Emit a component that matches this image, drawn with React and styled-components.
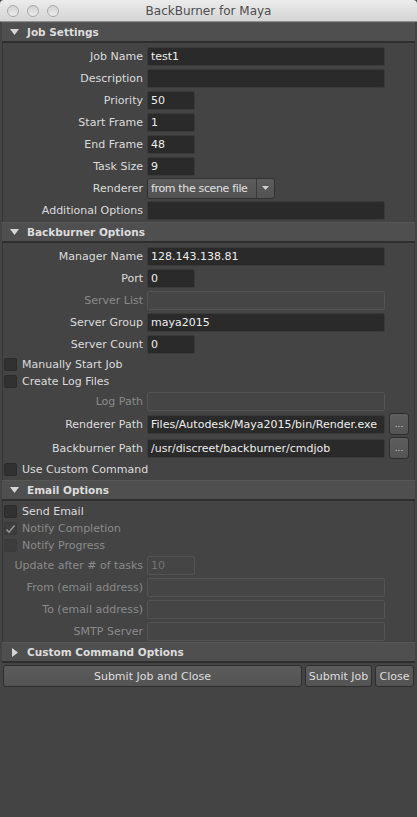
import React from "react";
import styled, { createGlobalStyle } from "styled-components";

const Global = createGlobalStyle`
  html, body { margin: 0; padding: 0; background: #444444; }
  body { font-family: "DejaVu Sans", "Liberation Sans", sans-serif; font-size: 11px; }
  * { box-sizing: border-box; }
`;

const Window = styled.div`
  width: 417px;
  height: 817px;
  background: #444444;
  display: flex;
  flex-direction: column;
  overflow: hidden;
`;

const TitleBar = styled.div`
  height: 22px;
  flex: none;
  position: relative;
  display: flex;
  align-items: center;
  justify-content: center;
  background: linear-gradient(#ececec, #d4d4d4);
  border-bottom: 1px solid #8e8e8e;
  border-radius: 4px 4px 0 0;
`;

const Lights = styled.div`
  position: absolute;
  left: 7px;
  top: 5px;
  display: flex;
  gap: 8px;
`;

const Light = styled.span`
  width: 12px;
  height: 12px;
  border-radius: 50%;
  background: linear-gradient(#d2d2d2, #ececec);
  border: 1px solid #a9a9a9;
`;

const Title = styled.div`
  font-size: 12px;
  color: #4d4d4d;
`;

const Content = styled.div`
  padding: 0 2px;
  display: flex;
  flex-direction: column;
`;

const HeaderBar = styled.div`
  height: 21px;
  display: flex;
  align-items: center;
  background: #4f4f4f;
  border-top: 1px solid #565656;
  border-bottom: 2px solid #2e2e2e;
  color: #dddddd;
  font-weight: bold;
  font-size: 10.5px;
`;

const Arrow = styled.span`
  width: 25px;
  display: flex;
  justify-content: center;
`;

const SectionBody = styled.div`
  border-left: 1px solid #363636;
  border-right: 1px solid #3a3a3a;
  padding: 2px 0 ${(p) => p.$pb || 0}px 0;
  display: flex;
  flex-direction: column;
`;

const Row = styled.div`
  height: ${(p) => p.$h || 22}px;
  display: flex;
  align-items: center;
`;

const Label = styled.div`
  width: 140px;
  margin-right: 4px;
  text-align: right;
  white-space: nowrap;
  color: ${(p) => (p.$disabled ? "#8a8a8a" : "#dcdcdc")};
`;

const Field = styled.div`
  width: ${(p) => p.$w || 238}px;
  height: 19px;
  border-radius: 2px;
  padding: 0 3px;
  display: flex;
  align-items: center;
  overflow: hidden;
  white-space: nowrap;
  font-size: 11px;
  background: ${(p) => (p.$disabled ? "#454545" : "#2a2a2a")};
  border: 1px solid ${(p) => (p.$disabled ? "#535353" : "#3a3a3a")};
  color: ${(p) => (p.$disabled ? "#747474" : "#eeeeee")};
`;

const Dropdown = styled.div`
  width: 128px;
  height: 21px;
  display: flex;
  align-items: stretch;
  border: 1px solid #323232;
  border-radius: 3px;
  background: linear-gradient(#5c5c5c, #525252);
  color: #e2e2e2;
`;

const DropText = styled.div`
  flex: 1;
  display: flex;
  align-items: center;
  padding-left: 3px;
  border-right: 1px solid #3a3a3a;
  white-space: nowrap;
  overflow: hidden;
  letter-spacing: -0.35px;
`;

const DropArrow = styled.div`
  width: 17px;
  flex: none;
  display: flex;
  align-items: center;
  justify-content: center;
`;

const SmallButton = styled.div`
  width: 20px;
  height: 22px;
  margin-left: 4px;
  border: 1px solid #2e2e2e;
  border-radius: 3px;
  background: linear-gradient(#5e5e5e, #545454);
  color: #cfcfcf;
  display: flex;
  align-items: flex-end;
  justify-content: center;
  padding-bottom: 5px;
  font-size: 9px;
  line-height: 1;
`;

const CheckRow = styled.div`
  height: ${(p) => p.$h || 17}px;
  display: flex;
  align-items: center;
  padding-left: 1px;
`;

const Box = styled.span`
  width: 13px;
  height: 13px;
  border-radius: 2px;
  margin-right: 5px;
  display: flex;
  align-items: center;
  justify-content: center;
  background: ${(p) => (p.$disabled ? "#3d3d3d" : "#313131")};
  border: 1px solid ${(p) => (p.$disabled ? "#3a3a3a" : "#2b2b2b")};
`;

const CheckLabel = styled.span`
  color: ${(p) => (p.$disabled ? "#8a8a8a" : "#dcdcdc")};
  white-space: nowrap;
`;

const ButtonBar = styled.div`
  display: flex;
  gap: 3px;
  padding: 2px 1px 0 1px;
`;

const Button = styled.div`
  height: 22px;
  flex: ${(p) => (p.$grow ? "1" : "none")};
  width: ${(p) => (p.$w ? p.$w + "px" : "auto")};
  display: flex;
  align-items: center;
  justify-content: center;
  border: 1px solid #2e2e2e;
  border-radius: 3px;
  background: linear-gradient(#5c5c5c, #535353);
  color: #dedede;
  white-space: nowrap;
`;

const DownTri = () => (
  <svg width="9" height="6" viewBox="0 0 9 6">
    <path d="M0 0 L9 0 L4.5 6 Z" fill="#d6d6d6" />
  </svg>
);

const RightTri = () => (
  <svg width="6" height="9" viewBox="0 0 6 9">
    <path d="M0 0 L6 4.5 L0 9 Z" fill="#d6d6d6" />
  </svg>
);

const Header = ({ title, open = true }) => (
  <HeaderBar>
    <Arrow>{open ? <DownTri /> : <RightTri />}</Arrow>
    {title}
  </HeaderBar>
);

const FieldRow = ({ label, value = "", w, disabled, h }) => (
  <Row $h={h}>
    <Label $disabled={disabled}>{label}</Label>
    <Field $w={w} $disabled={disabled}>{value}</Field>
  </Row>
);

const PathRow = ({ label, value }) => (
  <Row $h={24}>
    <Label>{label}</Label>
    <Field>{value}</Field>
    <SmallButton>...</SmallButton>
  </Row>
);

const Check = ({ label, checked, disabled, h }) => (
  <CheckRow $h={h}>
    <Box $disabled={disabled}>
      {checked && (
        <svg width="11" height="10" viewBox="0 0 11 10">
          <path d="M1.5 5.5 L4 8.2 L9.5 1.5" stroke="#9a9a9a" strokeWidth="1.4" fill="none" />
        </svg>
      )}
    </Box>
    <CheckLabel $disabled={disabled}>{label}</CheckLabel>
  </CheckRow>
);

export default function App() {
  return (
    <Window>
      <Global />
      <TitleBar>
        <Lights>
          <Light />
          <Light />
          <Light />
        </Lights>
        <Title>BackBurner for Maya</Title>
      </TitleBar>
      <Content>
        <Header title="Job Settings" />
        <SectionBody $pb={1}>
          <FieldRow label="Job Name" value="test1" />
          <FieldRow label="Description" />
          <FieldRow label="Priority" value="50" w={48} />
          <FieldRow label="Start Frame" value="1" w={48} />
          <FieldRow label="End Frame" value="48" w={48} />
          <FieldRow label="Task Size" value="9" w={48} />
          <Row>
            <Label>Renderer</Label>
            <Dropdown>
              <DropText>from the scene file</DropText>
              <DropArrow>
                <svg width="7" height="4" viewBox="0 0 7 4">
                  <path d="M0 0 L7 0 L3.5 4 Z" fill="#cfcfcf" />
                </svg>
              </DropArrow>
            </Dropdown>
          </Row>
          <FieldRow label="Additional Options" />
        </SectionBody>

        <Header title="Backburner Options" />
        <SectionBody $pb={2}>
          <FieldRow label="Manager Name" value="128.143.138.81" />
          <FieldRow label="Port" value="0" w={48} />
          <FieldRow label="Server List" disabled />
          <FieldRow label="Server Group" value="maya2015" />
          <FieldRow label="Server Count" value="0" w={48} />
          <Check label="Manually Start Job" h={18} />
          <Check label="Create Log Files" />
          <FieldRow label="Log Path" disabled />
          <PathRow label="Renderer Path" value="Files/Autodesk/Maya2015/bin/Render.exe" />
          <PathRow label="Backburner Path" value="/usr/discreet/backburner/cmdjob" />
          <Check label="Use Custom Command" h={18} />
        </SectionBody>

        <Header title="Email Options" />
        <SectionBody>
          <Check label="Send Email" />
          <Check label="Notify Completion" checked disabled />
          <Check label="Notify Progress" disabled />
          <FieldRow label="Update after # of tasks" value="10" w={48} disabled />
          <FieldRow label="From (email address)" disabled />
          <FieldRow label="To (email address)" disabled />
          <FieldRow label="SMTP Server" disabled />
        </SectionBody>

        <Header title="Custom Command Options" open={false} />
        <ButtonBar>
          <Button $grow>Submit Job and Close</Button>
          <Button $w={67}>Submit Job</Button>
          <Button $w={39}>Close</Button>
        </ButtonBar>
      </Content>
    </Window>
  );
}
